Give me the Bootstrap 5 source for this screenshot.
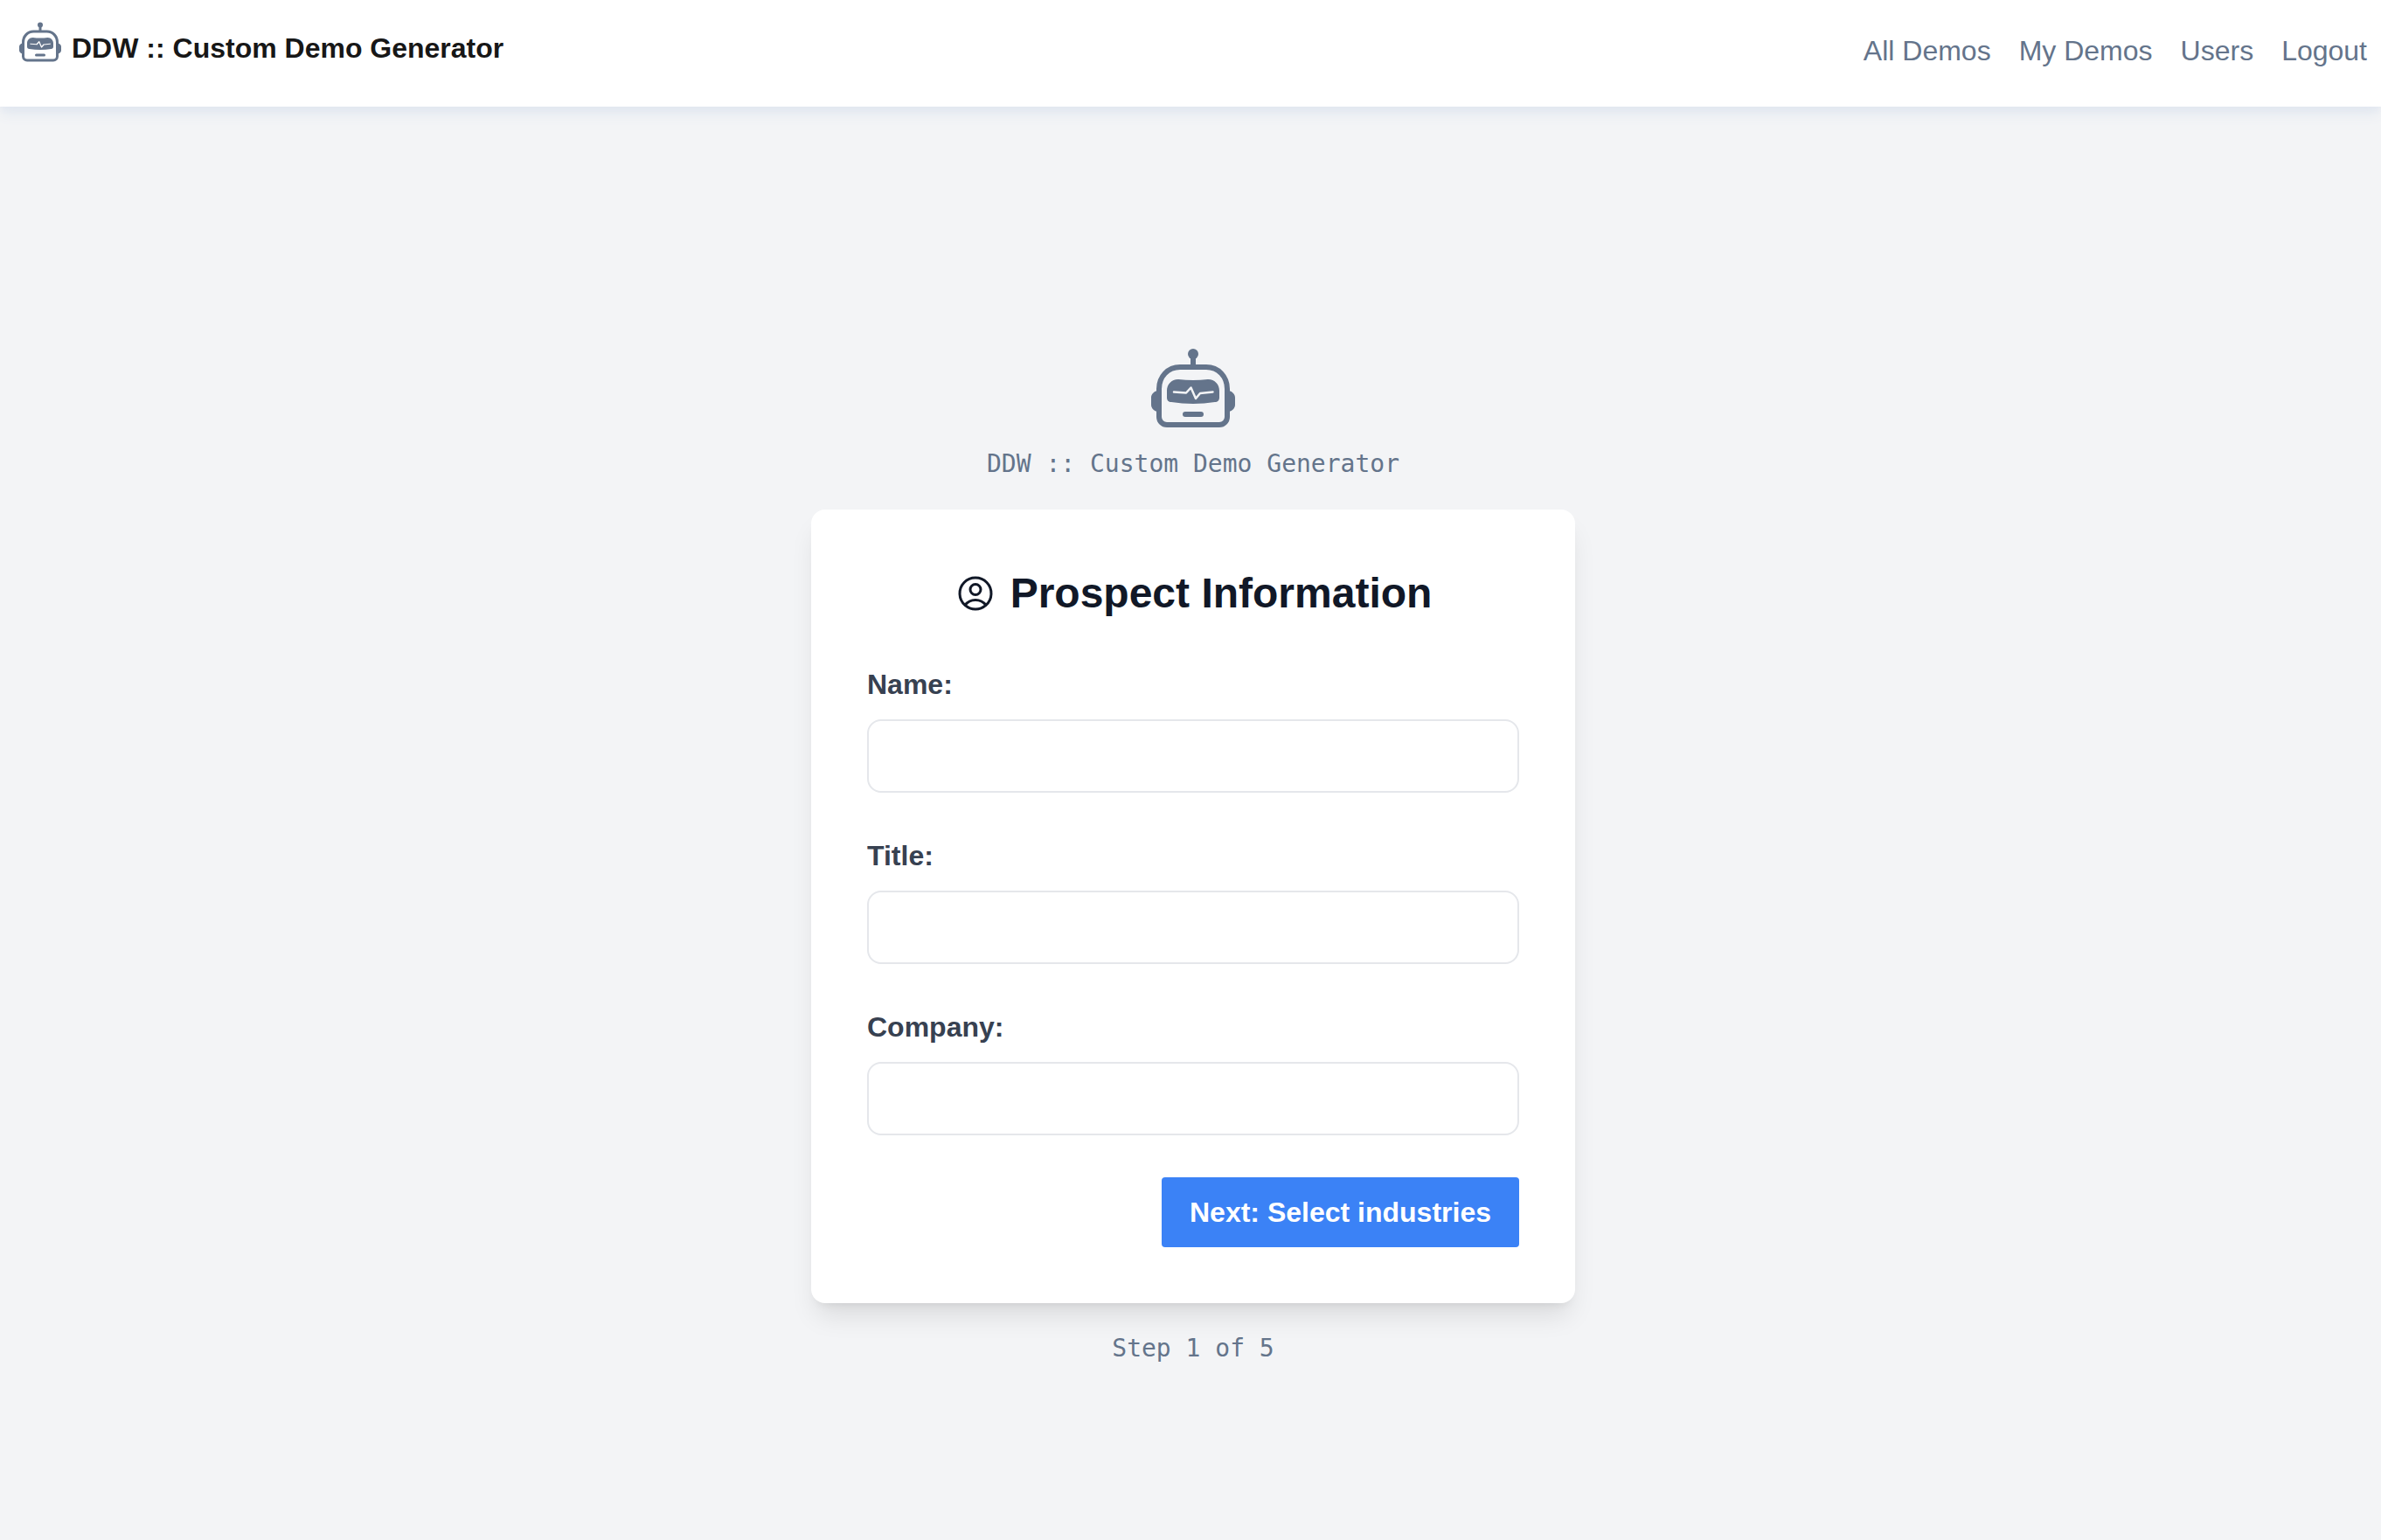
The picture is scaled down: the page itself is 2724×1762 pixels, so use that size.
<!DOCTYPE html>
<html lang="en">
<head>
<meta charset="utf-8">
<meta name="viewport" content="width=device-width, initial-scale=1">
<title>DDW :: Custom Demo Generator</title>
<link href="https://cdn.jsdelivr.net/npm/bootstrap@5.3.0/dist/css/bootstrap.min.css" rel="stylesheet">
<style>
  body { font-family: "Liberation Sans", Arial, sans-serif; font-size: 32px; line-height: 48px; background: #f3f4f6; color: #111827; min-height: 100vh; }
  .site-header { background: #fff; min-height: 122px; padding: 24px 16px 0; box-shadow: 0 10px 14px -2px #e2e8f0, 0 4px 8px -2px #e0e4f0; }
  .site-brand { color: #171717; line-height: 62px; gap: 12px; padding-left: 6px; }
  .site-brand:hover { color: #171717; }
  .site-links { gap: 32px; }
  .site-links .nav-link { color: #64748b; padding: 10px 0; }
  .site-links .nav-link:hover { color: #334155; }
  .robot-small { width: 48px; height: 48px; color: #64748b; --pulse: #fff; }
  .robot-large { width: 96px; height: 96px; color: #64748b; --pulse: #f3f4f6; margin-bottom: 19px; }
  .wizard { padding: 274px 0 64px 6px; }
  .caption-mono { font: 28px/40px "DejaVu Sans Mono", monospace; color: #64748b; }
  .wizard-card { width: 874px; max-width: 100%; margin: 32px 0; padding: 64px; border: 0; border-radius: 16px; box-shadow: 0 20px 30px -6px rgba(0,0,0,.1), 0 8px 12px -8px rgba(0,0,0,.1); }
  .wizard-title { font-size: 48px; line-height: 64px; margin-bottom: 48px; gap: 16px; color: #111827; }
  .wizard-title svg { width: 48px; height: 48px; }
  .wizard-field { margin-bottom: 48px; }
  .wizard-field .form-label { display: block; margin-bottom: 16px; color: #374151; }
  .wizard-field .form-control { height: 84px; padding: 16px 24px; font-size: 32px; border: 2px solid #e5e7eb; border-radius: 16px; }
  .btn-next { background: #3b82f6; color: #fff; font-size: 32px; line-height: 48px; padding: 16px 32px; border: 0; border-radius: 4px; }
  .btn-next:hover { background: #2563eb; color: #fff; }
</style>
<script src="https://cdn.jsdelivr.net/npm/bootstrap@5.3.0/dist/js/bootstrap.bundle.min.js" defer></script>
</head>
<body>
<svg class="d-none" aria-hidden="true">
  <symbol id="robot" viewBox="0 0 96 96">
    <circle cx="48" cy="9" r="6" fill="currentColor"/>
    <path d="M48 9v14" stroke="currentColor" stroke-width="6" fill="none"/>
    <path d="M9 51H7C3 52 0 55 0 59v8c0 4 3 7 7 8h2zM87 51h2c4 1 7 4 7 8v8c0 4-3 7-7 8h-2z" fill="currentColor"/>
    <path d="M33 24h30c14 0 24 11 24 25v32c0 5-4 9-9 9H18c-5 0-9-4-9-9V49c0-14 10-25 24-25z" stroke="currentColor" stroke-width="6" fill="none"/>
    <path d="M31 38q17 2 34 0c8 0 13 6 13 13v8c0 3-2 5-5 5q-25 4-50 0c-3 0-5-2-5-5v-8c0-7 5-13 13-13z" fill="currentColor"/>
    <path d="M26 52.500l14 1 5.500-6L51 60l5-6 14.500-1.500" stroke="var(--pulse)" stroke-width="2.500" stroke-linecap="round" stroke-linejoin="round" fill="none"/>
    <path d="M39 78h18" stroke="currentColor" stroke-width="6" stroke-linecap="round"/>
  </symbol>
</svg>

<header class="site-header d-flex justify-content-between align-items-start">
  <a class="site-brand d-flex align-items-start fw-bold text-decoration-none" href="#">
    <svg class="robot-small" aria-hidden="true"><use href="#robot"/></svg>
    <span>DDW :: Custom Demo Generator</span>
  </a>
  <nav class="nav site-links" aria-label="Main">
    <a class="nav-link" href="#">All Demos</a>
    <a class="nav-link" href="#">My Demos</a>
    <a class="nav-link" href="#">Users</a>
    <a class="nav-link" href="#">Logout</a>
  </nav>
</header>

<main class="wizard d-flex flex-column align-items-center">
  <svg class="robot-large" aria-hidden="true"><use href="#robot"/></svg>
  <div class="caption-mono">DDW :: Custom Demo Generator</div>
  <form class="card wizard-card">
    <h1 class="wizard-title fw-bold d-flex align-items-center justify-content-center">
      <svg viewBox="0 0 24 24" fill="none" stroke="currentColor" stroke-width="1.5" stroke-linecap="round" stroke-linejoin="round" aria-hidden="true">
        <path d="M17.982 18.725A7.488 7.488 0 0 0 12 15.750a7.488 7.488 0 0 0-5.982 2.975m11.963 0a9 9 0 1 0-11.963 0m11.963 0A8.966 8.966 0 0 1 12 21a8.966 8.966 0 0 1-5.982-2.275M15 9.750a3 3 0 1 1-6 0 3 3 0 0 1 6 0z"/>
      </svg>
      <span>Prospect Information</span>
    </h1>
    <div class="wizard-field">
      <label class="form-label fw-bold" for="name">Name:</label>
      <input class="form-control" type="text" id="name" name="name">
    </div>
    <div class="wizard-field">
      <label class="form-label fw-bold" for="title">Title:</label>
      <input class="form-control" type="text" id="title" name="title">
    </div>
    <div class="wizard-field">
      <label class="form-label fw-bold" for="company">Company:</label>
      <input class="form-control" type="text" id="company" name="company">
    </div>
    <div class="d-flex justify-content-end">
      <button class="btn btn-next fw-bold" type="submit">Next: Select industries</button>
    </div>
  </form>
  <div class="caption-mono">Step 1 of 5</div>
</main>
</body>
</html>
